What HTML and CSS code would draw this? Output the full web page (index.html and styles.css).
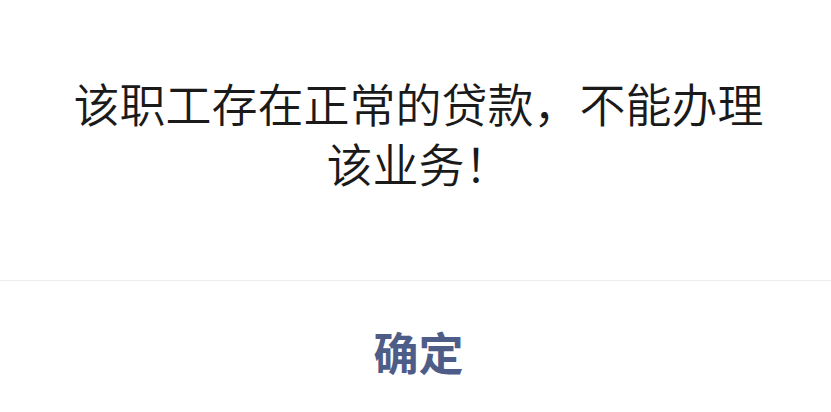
FILE: index.html
```html
<!DOCTYPE html>
<html lang="zh-CN">
<head>
<meta charset="utf-8">
<title>提示</title>
<link rel="stylesheet" href="styles.css">
</head>
<body>
<div class="dialog">
  <div class="message">该职工存在正常的贷款，不能办理该业务！</div>
  <div class="actions">
    <button class="confirm" type="button">确定</button>
  </div>
</div>
</body>
</html>
```
FILE: styles.css
```css
html, body {
  margin: 0;
  padding: 0;
  background: #ffffff;
}
body {
  font-family: "Noto Sans CJK SC", "Noto Sans", sans-serif;
}
.dialog {
  width: 831px;
  height: 412px;
  display: flex;
  flex-direction: column;
  background: #ffffff;
}
.message {
  padding: 72px 46px 88px 52px;
  font-size: 46px;
  line-height: 60px;
  font-weight: 350;
  color: #1a1a1a;
  text-align: center;
  border-bottom: 1px solid #ececec;
}
.actions {
  flex: 1;
  display: flex;
  justify-content: center;
  align-items: flex-start;
  padding-top: 41px;
  padding-left: 6px;
}
.confirm {
  border: 0;
  background: none;
  padding: 0;
  margin: 0;
  font-family: "Noto Sans CJK SC", "Noto Sans", sans-serif;
  font-size: 45px;
  line-height: 60px;
  font-weight: 700;
  color: #4e5d87;
  cursor: pointer;
}
```
